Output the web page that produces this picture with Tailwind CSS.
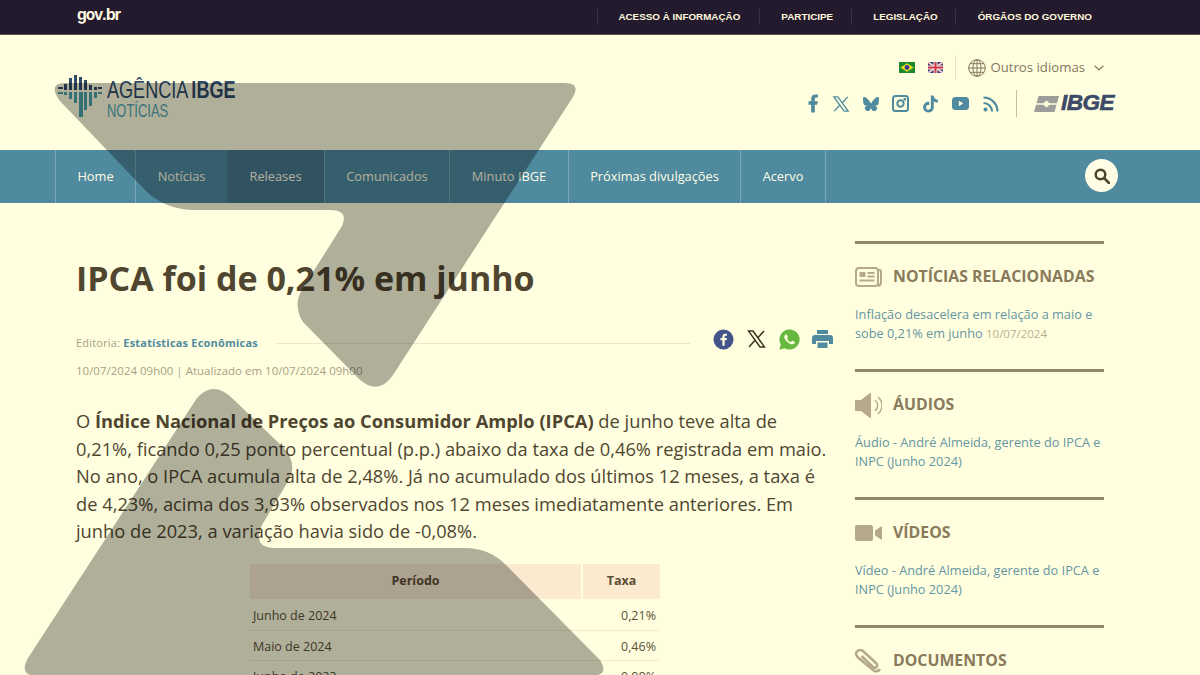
<!DOCTYPE html>
<html lang="pt-BR">
<head>
  <meta charset="UTF-8" />
  <meta name="viewport" content="width=device-width, initial-scale=1.0"/>
  <title>IPCA foi de 0,21% em junho</title>
  <script src="https://cdn.jsdelivr.net/npm/@tailwindcss/browser@4"></script>
</head>
<body class="bg-[#ffffe0] text-[#504630] font-['Open_Sans',sans-serif]">
<div class="relative h-[675px] w-[1200px] overflow-hidden">

  <!-- barra gov.br -->
  <div class="flex h-[35px] items-center justify-between border-b border-[#5b5245] bg-[#241a2e] pl-[77px] pr-[108px] font-['Liberation_Sans',sans-serif] text-[9.850px] font-bold text-[#fff8dc]">
    <span class="-mt-[4px] font-['Inter',sans-serif] text-[15.500px] font-bold tracking-[-1px] text-[#fff8e0]">gov.br</span>
    <div class="flex items-center">
      <a class="border-l border-[#3b3145] pl-[20px] pr-[19px] leading-[16px]">ACESSO À INFORMAÇÃO</a>
      <a class="border-l border-[#3b3145] pl-[21px] pr-[18px] leading-[16px]">PARTICIPE</a>
      <a class="border-l border-[#3b3145] pl-[21px] pr-[17px] leading-[16px]">LEGISLAÇÃO</a>
      <a class="border-l border-[#3b3145] pl-[22px] leading-[16px]">ÓRGÃOS DO GOVERNO</a>
    </div>
  </div>

  <!-- cabecalho -->
  <header class="flex h-[115px] justify-between pl-[58px] pr-[86px]">
    <div class="flex items-start gap-[5px] pt-[40px]">
      <svg width="44" height="43" viewBox="0 0 44 43">
        <g fill="#2f4a68">
          <rect x="0" y="12" width="5" height="2"/><rect x="6" y="9" width="3" height="6"/><rect x="11" y="3" width="3" height="12"/><rect x="16" y="0" width="3" height="15"/><rect x="21" y="2" width="3" height="13"/><rect x="26" y="5" width="3" height="10"/><rect x="31" y="10" width="3" height="5"/><rect x="36" y="12" width="3" height="3"/><rect x="40" y="12" width="4" height="2"/>
        </g>
        <g fill="#4fa3ad">
          <rect x="0" y="17" width="5" height="2"/><rect x="6" y="17" width="3" height="3"/><rect x="11" y="17" width="3" height="7"/><rect x="16" y="17" width="3" height="11"/><rect x="21" y="17" width="4" height="25"/><rect x="26" y="17" width="3" height="18"/><rect x="31" y="17" width="3" height="14"/><rect x="36" y="17" width="3" height="6"/><rect x="40" y="17" width="4" height="2"/>
        </g>
      </svg>
      <div class="mt-[3px] flex flex-col font-['Liberation_Sans',sans-serif]">
        <div class="flex h-[24px] origin-left scale-x-[.753] items-center gap-[4px] whitespace-nowrap text-[24px] leading-[24px] text-[#2f4a68]">
          <span>AGÊNCIA</span><span class="font-bold">IBGE</span>
        </div>
        <span class="origin-left scale-x-[.72] whitespace-nowrap text-[18px] leading-[18px] text-[#55a8b0]">NOTÍCIAS</span>
      </div>
    </div>

    <div class="flex flex-col items-end">
      <div class="mt-[20px] flex h-[25px] items-center pr-[10px]">
        <svg class="mr-[13px]" width="16" height="11" viewBox="0 0 16 11"><rect width="16" height="11" fill="#1a8a2a"/><path d="M8 1.200 14.500 5.500 8 9.800 1.500 5.500z" fill="#f0df20"/><circle cx="8" cy="5.500" r="2.400" fill="#3a3a90"/></svg>
        <svg class="mr-[12px]" width="15" height="11" viewBox="0 0 15 11"><rect width="15" height="11" fill="#34386e"/><path d="M0 0 15 11M15 0 0 11" stroke="#f0c8c8" stroke-width="2"/><path d="M7.500 0v11M0 5.500h15" stroke="#f4e0e0" stroke-width="4"/><path d="M7.500 0v11M0 5.500h15" stroke="#d03a48" stroke-width="2"/></svg>
        <span class="mr-[12px] h-[25px] border-l border-[#ece6c6]"></span>
        <svg class="mr-[4px]" width="18" height="18" viewBox="0 0 18 18" fill="none" stroke="#84775c" stroke-width="1"><circle cx="9" cy="9" r="8.300"/><ellipse cx="9" cy="9" rx="4" ry="8.300"/><path d="M9 .7v16.600M.7 9h16.600M2 4.700h14M2 13.300h14"/></svg>
        <span class="text-[13.200px] text-[#84775c]">Outros idiomas</span>
        <svg class="ml-[9px]" width="10" height="6" viewBox="0 0 10 6" fill="none" stroke="#84775c" stroke-width="1.200"><path d="M.6.8 5 5 9.400.8"/></svg>
      </div>
      <div class="mt-[10px] flex h-[27px] items-center text-[#4f8a9e]">
        <svg class="mr-[13px]" width="12" height="19" viewBox="6 1.500 12 21" fill="currentColor"><path d="M14 13.500h2.500l1-4H14v-2c0-1.030 0-2 2-2h1.500V2.140c-.326-.043-1.557-.14-2.857-.14C11.928 2 10 3.657 10 6.700v2.800H7v4h3V22h4z"/></svg>
        <svg class="mr-[13px]" width="18" height="18" viewBox="0 0 24 24" fill="none" stroke="currentColor" stroke-width="1.800"><path d="M2.500 2.500h5.300l13.700 19h-5.300zM21 2.500l-7.700 8.400M10.500 13.300 3 21.500"/></svg>
        <svg class="mr-[13px]" width="16" height="15" viewBox="0 0 24 22" fill="currentColor"><path d="M5.202 2.857C7.954 4.922 10.913 9.110 12 11.358c1.087-2.247 4.046-6.436 6.798-8.501C20.783 1.366 24 .213 24 3.883c0 .733-.42 6.156-.667 7.037-.856 3.061-3.978 3.842-6.755 3.370 4.854.826 6.089 3.562 3.422 6.299-5.065 5.196-7.280-1.304-7.847-2.970-.104-.305-.152-.448-.153-.327 0-.121-.05.022-.153.327-.568 1.666-2.782 8.166-7.847 2.970-2.667-2.737-1.432-5.473 3.422-6.300-2.777.473-5.899-.308-6.755-3.369C.42 10.040 0 4.616 0 3.883c0-3.670 3.217-2.517 5.202-1.026"/></svg>
        <svg class="mr-[13px]" width="17" height="17" viewBox="0 0 17 17" fill="none" stroke="currentColor" stroke-width="2"><rect x="1" y="1" width="15" height="15" rx="2.500"/><circle cx="8.500" cy="8.500" r="3.200"/><rect x="11.500" y="3" width="2.500" height="2.500" fill="currentColor" stroke="none"/></svg>
        <svg class="mr-[13px]" width="17" height="18" viewBox="0 0 24 24" fill="currentColor"><path d="M12.525.02c1.310-.02 2.610-.01 3.910-.02.08 1.530.63 3.090 1.750 4.170 1.120 1.110 2.700 1.620 4.240 1.790v4.030c-1.440-.05-2.890-.35-4.200-.97-.57-.26-1.100-.59-1.620-.93-.01 2.920.01 5.840-.02 8.750-.08 1.400-.54 2.790-1.350 3.940-1.310 1.920-3.580 3.170-5.910 3.210-1.430.08-2.860-.31-4.080-1.030-2.020-1.190-3.440-3.370-3.650-5.710-.02-.5-.03-1-.01-1.490.18-1.900 1.120-3.720 2.580-4.960 1.660-1.440 3.980-2.130 6.150-1.720.02 1.480-.04 2.960-.04 4.440-.99-.32-2.150-.23-3.020.37-.63.41-1.110 1.040-1.360 1.750-.21.51-.15 1.070-.14 1.610.24 1.640 1.820 3.020 3.500 2.870 1.120-.01 2.190-.66 2.770-1.610.19-.33.4-.67.41-1.060.1-1.790.06-3.570.07-5.360.01-4.030-.01-8.050.02-12.070z"/></svg>
        <svg class="mr-[14px]" width="17" height="13" viewBox="0 0 17 13"><rect width="17" height="13" rx="3.500" fill="currentColor"/><path d="M6.800 3.700 11.200 6.500 6.800 9.300z" fill="#ffffe0"/></svg>
        <svg class="mr-[17px]" width="16" height="16" viewBox="0 0 16 16" fill="none" stroke="currentColor" stroke-width="2.200"><circle cx="2.500" cy="13.500" r="2" fill="currentColor" stroke="none"/><path d="M.5 7a8.500 8.500 0 0 1 8.500 8.500M.5 1.500a14 14 0 0 1 14 14"/></svg>
        <span class="mr-[17px] h-[27px] border-l border-[#c7bd9d]"></span>
        <svg class="mr-[2px]" width="25" height="16" viewBox="0 0 25 16"><path d="M4.500 0H25l-4.500 16H0z" fill="#9d9d9a"/><path d="M12.500 4.500 16.500 8 12.500 11.500 8.500 8z" fill="#ffffe0"/><path d="M0 8h25" stroke="#ffffe0" stroke-width="1.500"/></svg>
        <span class="font-['Liberation_Sans',sans-serif] text-[22.500px] font-bold italic leading-none tracking-[-.5px] text-[#3c4a68] [-webkit-text-stroke:.6px_#3c4a68]">IBGE</span>
      </div>
    </div>
  </header>

  <!-- menu -->
  <nav class="flex h-[53px] items-stretch justify-between bg-[#4f8a9e] pl-[55px] pr-[82px] text-[12.800px] text-[#fffde6]">
    <div class="flex border-r border-[#7aa8b5]">
      <a class="flex w-[80px] items-center justify-center border-l border-[#7aa8b5]">Home</a>
      <a class="flex w-[92px] items-center justify-center border-l border-[#7aa8b5]">Notícias</a>
      <a class="flex w-[97px] items-center justify-center bg-[#47788c]">Releases</a>
      <a class="flex w-[125px] items-center justify-center border-l border-[#7aa8b5]">Comunicados</a>
      <a class="flex w-[119px] items-center justify-center border-l border-[#7aa8b5]">Minuto IBGE</a>
      <a class="flex w-[172px] items-center justify-center border-l border-[#7aa8b5]">Próximas divulgações</a>
      <a class="flex w-[85px] items-center justify-center border-l border-[#7aa8b5]">Acervo</a>
    </div>
    <button class="mt-[9px] flex h-[33px] w-[33px] items-center justify-center rounded-full bg-[#fffde6]">
      <svg width="16" height="16" viewBox="0 0 16 16" fill="none" stroke="#4d432c" stroke-width="2.500"><circle cx="6.500" cy="6.500" r="4.800"/><path d="M10 10l5 5" stroke-linecap="round"/></svg>
    </button>
  </nav>

  <!-- conteudo -->
  <main class="flex pl-[76px]">
    <article class="w-[752px] shrink-0">
      <h1 class="mt-[53px] text-[34px] font-bold leading-[44px]">IPCA foi de 0,21% em junho</h1>

      <div class="mt-[30px] flex h-[26px] items-center">
        <span class="w-[182px] shrink-0 whitespace-nowrap text-[11px] tracking-[.2px] text-[#a99f85]">Editoria: <b class="font-bold text-[#4f8a9e]">Estatísticas Econômicas</b></span>
        <span class="ml-[18px] w-[414px] shrink-0 border-t border-[#ece6c6]"></span>
        <div class="-mt-[8px] ml-[23px] flex shrink-0 items-center gap-[12px]">
          <svg width="21" height="21" viewBox="0 0 22 22"><circle cx="11" cy="11" r="10.500" fill="#43548a"/><path d="M12.200 17.500v-5.700h2l.3-2.300h-2.300V8.100c0-.7.2-1.100 1.100-1.100h1.300V5c-.2 0-1-.1-1.800-.1-1.800 0-3 1.100-3 3.100v1.500h-2v2.300h2v5.700z" fill="#ffffe0"/></svg>
          <svg width="21" height="20" viewBox="0 0 24 24" fill="none" stroke="#3a3320" stroke-width="1.800"><path d="M2.500 2.500h5.300l13.700 19h-5.300zM21 2.500l-7.700 8.400M10.500 13.300 3 21.500"/></svg>
          <svg width="21" height="21" viewBox="0 0 24 24"><path d="M12 .5a11.500 11.500 0 0 0-9.900 17.300L.4 23.600l6-1.600A11.500 11.500 0 1 0 12 .5z" fill="#66b83f"/><path d="M17.472 14.382c-.297-.149-1.758-.867-2.030-.967-.273-.099-.471-.148-.670.150-.197.297-.767.966-.940 1.164-.173.199-.347.223-.644.075-.297-.150-1.255-.463-2.390-1.475-.883-.788-1.480-1.761-1.653-2.059-.173-.297-.018-.458.130-.606.134-.133.298-.347.446-.520.149-.174.198-.298.298-.497.099-.198.050-.371-.025-.520-.075-.149-.669-1.612-.916-2.207-.242-.579-.487-.500-.669-.510-.173-.008-.371-.010-.570-.010-.198 0-.520.074-.792.372-.272.297-1.040 1.016-1.040 2.479 0 1.462 1.065 2.875 1.213 3.074.149.198 2.096 3.200 5.077 4.487.709.306 1.262.489 1.694.625.712.227 1.360.195 1.871.118.571-.085 1.758-.719 2.006-1.413.248-.694.248-1.289.173-1.413-.074-.124-.272-.198-.570-.347" fill="#ffffe0"/></svg>
          <svg width="21" height="18" viewBox="0 0 21 18" fill="#4f8a9e"><path d="M5 0h11v4H5zM3 5h15a3 3 0 0 1 3 3v6h-4v-3H4v3H0V8a3 3 0 0 1 3-3z"/><path d="M5.500 12.500h10V18h-10z"/></svg>
        </div>
      </div>

      <p class="mt-[5px] text-[11.500px] leading-[20px] text-[#a99f85]">10/07/2024 09h00 | Atualizado em 10/07/2024 09h00</p>

      <p class="mt-[26px] text-[18.300px] leading-[27.500px]">O <b class="font-bold">Índice Nacional de Preços ao Consumidor Amplo (IPCA)</b> de junho teve alta de 0,21%, ficando 0,25 ponto percentual (p.p.) abaixo da taxa de 0,46% registrada em maio. No ano, o IPCA acumula alta de 2,48%. Já no acumulado dos últimos 12 meses, a taxa é de 4,23%, acima dos 3,93% observados nos 12 meses imediatamente anteriores. Em junho de 2023, a variação havia sido de -0,08%.</p>

      <table class="ml-[174px] mt-[19px] w-[410px] table-fixed border-separate border-spacing-0 text-[12.500px] text-[#5b4f38]">
        <thead>
          <tr class="h-[35px] font-bold">
            <th class="w-[333px] border-r-2 border-[#ffffe0] bg-[#fbeacf]">Período</th>
            <th class="bg-[#fbeacf]">Taxa</th>
          </tr>
        </thead>
        <tbody>
          <tr class="h-[32px]"><td class="border-b border-[#f2ecc8] pl-[3px] pt-[5px]">Junho de 2024</td><td class="border-b border-[#f2ecc8] pr-[4px] pt-[5px] text-right">0,21%</td></tr>
          <tr class="h-[30px]"><td class="border-b border-[#f2ecc8] pl-[3px] pt-[5px]">Maio de 2024</td><td class="border-b border-[#f2ecc8] pr-[4px] pt-[5px] text-right">0,46%</td></tr>
          <tr class="h-[30px]"><td class="border-b border-[#f2ecc8] pl-[3px] pt-[5px]">Junho de 2023</td><td class="border-b border-[#f2ecc8] pr-[4px] pt-[5px] text-right">-0,08%</td></tr>
        </tbody>
      </table>
    </article>

    <aside class="ml-[27px] w-[249px] pt-[38px]">
      <section class="h-[128px] border-t-[3px] border-[#91866a]">
        <div class="mt-[20px] flex h-[26px] items-center gap-[11px] text-[15.850px] font-bold text-[#8a7a5c]">
          <svg width="27" height="20" viewBox="0 0 27 20" fill="none" stroke="#b5a88c" stroke-width="2"><rect x="1" y="1" width="22" height="18" rx="3"/><path d="M23 3h1.500a1.500 1.500 0 0 1 1.500 1.500V15a4 4 0 0 1-3 4"/><rect x="4.500" y="5" width="6" height="5" fill="#b5a88c" stroke="none"/><path d="M12.500 6h7M12.500 9.500h7M4.500 13.500h15" stroke-width="1.800"/></svg>
          <h2>NOTÍCIAS RELACIONADAS</h2>
        </div>
        <p class="mt-[15px] text-[12.750px] leading-[19px] text-[#6695a1]">Inflação desacelera em relação a maio e sobe 0,21% em junho <span class="text-[11.500px] text-[#b9ae8f]">10/07/2024</span></p>
      </section>
      <section class="h-[128px] border-t-[3px] border-[#91866a]">
        <div class="mt-[20px] flex h-[26px] items-center gap-[11px] text-[15.850px] font-bold text-[#8a7a5c]">
          <svg width="27" height="25" viewBox="0 0 27 25" fill="none"><path d="M0 7h6l9-7h1v25h-1l-9-7H0z" fill="#b5a88c"/><path d="M20 7a7 7 0 0 1 0 11M23 4a11 11 0 0 1 0 17" stroke="#b5a88c" stroke-width="1.500"/></svg>
          <h2>ÁUDIOS</h2>
        </div>
        <p class="mt-[15px] text-[12.750px] leading-[19px] text-[#6695a1]">Áudio - André Almeida, gerente do IPCA e INPC (Junho 2024)</p>
      </section>
      <section class="h-[128px] border-t-[3px] border-[#91866a]">
        <div class="mt-[20px] flex h-[26px] items-center gap-[11px] text-[15.850px] font-bold text-[#8a7a5c]">
          <svg width="27" height="16" viewBox="0 0 27 16" fill="#b5a88c"><rect width="18" height="16" rx="2"/><path d="M27 1v14l-7-4.500v-5z"/></svg>
          <h2>VÍDEOS</h2>
        </div>
        <p class="mt-[15px] text-[12.750px] leading-[19px] text-[#6695a1]">Vídeo - André Almeida, gerente do IPCA e INPC (Junho 2024)</p>
      </section>
      <section class="h-[128px] border-t-[3px] border-[#91866a]">
        <div class="mt-[20px] flex h-[26px] items-center gap-[11px] text-[15.850px] font-bold text-[#8a7a5c]">
          <svg width="27" height="24" viewBox="0 0 27 24" fill="none" stroke="#b5a88c" stroke-width="2.500"><path d="M25 20c-1.500 2.500-4.500 3-7 1L3 8.500C.5 6 .5 3.500 2.500 2s4.500-1 6.500 1l12 11c1.500 1.500 1.500 3 .5 4s-2.500 1-4-.5L6.500 7"/></svg>
          <h2>DOCUMENTOS</h2>
        </div>
      </section>
    </aside>
  </main>

  <!-- marca d'agua por cima da pagina -->
  <svg class="pointer-events-none absolute left-0 top-0" width="1200" height="675" viewBox="0 0 1200 675" fill="#000" fill-opacity=".31">
    <path d="M65 83H565Q581 83 573 97L393 375Q378 397 358 378L303 322Q292 305 303 288L342 226Q349 210 330 210H195Q165 210 145 190L59 100Q48 83 65 83Z"/>
    <path d="M197 398Q213 380 232 398L283 447Q297 462 290 478L262 525Q252 548 275 548H465Q490 548 507 566L600 660Q610 676 590 676H38Q18 676 28 658Z"/>
  </svg>
</div>
</body>
</html>
